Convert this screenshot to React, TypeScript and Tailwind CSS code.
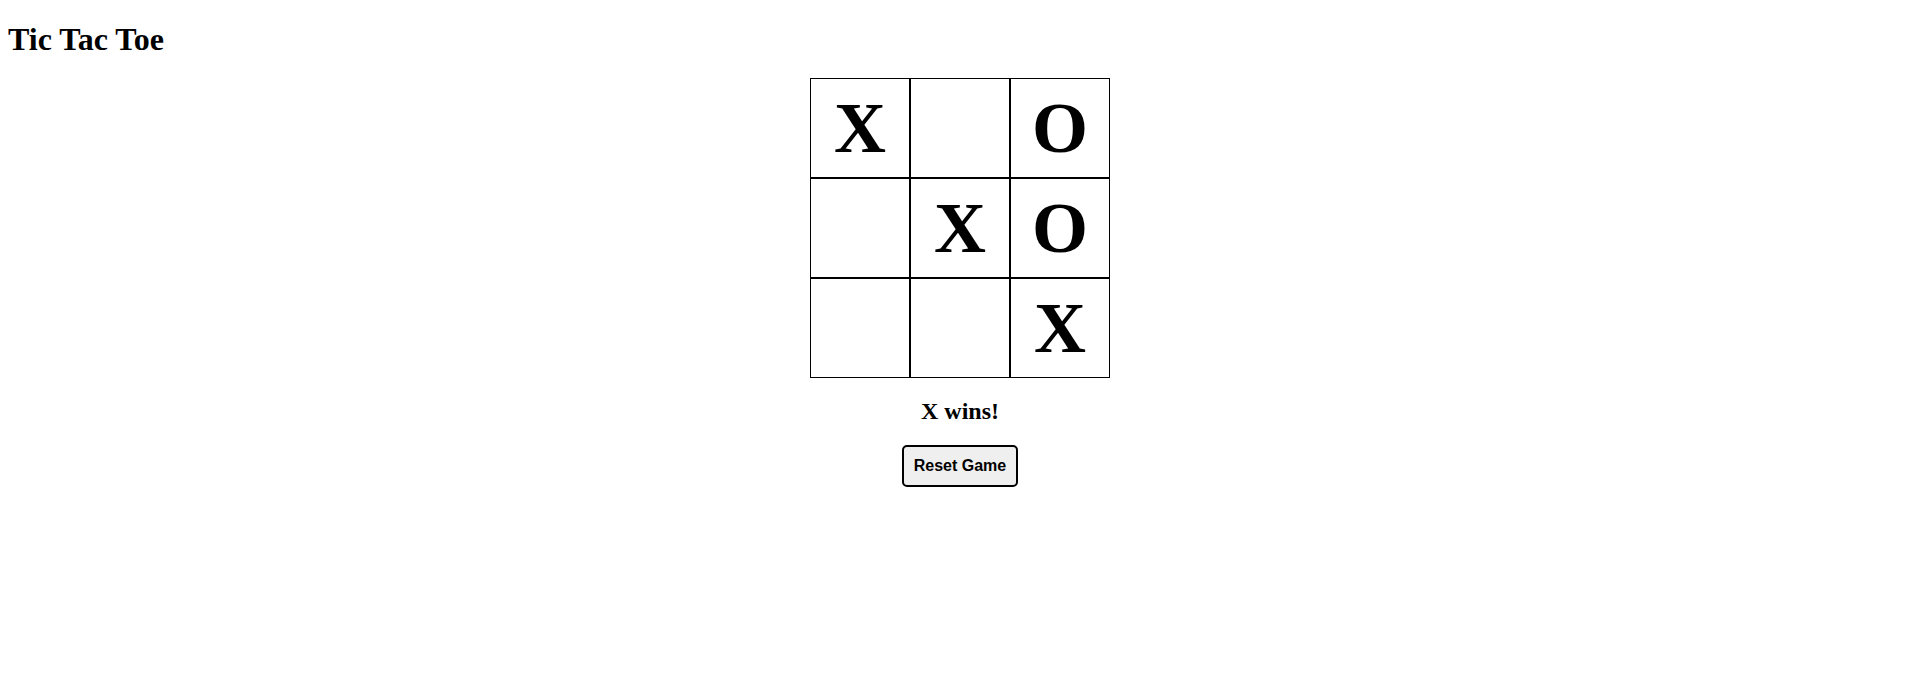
import React, { useState } from 'react';

type Cell = 'X' | 'O' | null;

const lines = [
  [0, 1, 2], [3, 4, 5], [6, 7, 8],
  [0, 3, 6], [1, 4, 7], [2, 5, 8],
  [0, 4, 8], [2, 4, 6],
];

const getWinner = (b: Cell[]) => {
  for (const [a, c, d] of lines) {
    if (b[a] && b[a] === b[c] && b[a] === b[d]) return b[a];
  }
  return null;
};

const start: Cell[] = ['X', null, 'O', null, 'X', 'O', null, null, 'X'];

const App = () => {
  const [board, setBoard] = useState<Cell[]>(start);
  const [xNext, setXNext] = useState(false);
  const winner = getWinner(board);

  const play = (i: number) => {
    if (board[i] || winner) return;
    const next = [...board];
    next[i] = xNext ? 'X' : 'O';
    setBoard(next);
    setXNext(!xNext);
  };

  const reset = () => {
    setBoard(Array(9).fill(null));
    setXNext(true);
  };

  const status = winner
    ? `${winner} wins!`
    : board.every(Boolean)
      ? "It's a draw!"
      : `Next player: ${xNext ? 'X' : 'O'}`;

  return (
    <div className="min-h-screen bg-white px-2 py-px text-black font-['Liberation_Serif',serif]">
      <h1 className="mt-[20.44px] mb-[20px] text-[32px] font-bold leading-[37px]">Tic Tac Toe</h1>

      <div className="mx-auto grid w-[300px] grid-cols-3">
        {board.map((cell, i) => (
          <button
            key={i}
            onClick={() => play(i)}
            className="flex h-[100px] w-[100px] items-center justify-center border border-black bg-white text-[72px] font-bold leading-none font-['Liberation_Serif',serif]"
          >
            {cell}
          </button>
        ))}
      </div>

      <h2 className="my-[19.92px] text-center text-[24px] font-bold leading-[27px]">{status}</h2>

      <div className="flex justify-center">
        <button
          onClick={reset}
          className="rounded-[5px] border-2 border-black bg-[#efefef] px-[10px] py-[10px] text-[16px] font-bold leading-[18px] font-['Liberation_Sans',Arial,sans-serif]"
        >
          Reset Game
        </button>
      </div>
    </div>
  );
};

export default App;
